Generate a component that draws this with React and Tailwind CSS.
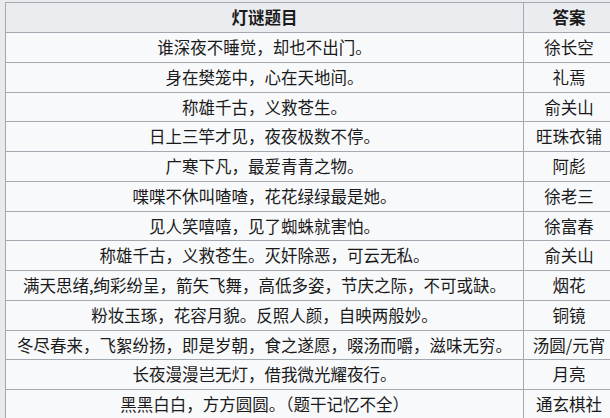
import React from "react";

const riddles = [
  ["谁深夜不睡觉，却也不出门。", "徐长空"],
  ["身在樊笼中，心在天地间。", "礼焉"],
  ["称雄千古，义救苍生。", "俞关山"],
  ["日上三竿才见，夜夜极数不停。", "旺珠衣铺"],
  ["广寒下凡，最爱青青之物。", "阿彪"],
  ["喋喋不休叫喳喳，花花绿绿最是她。", "徐老三"],
  ["见人笑嘻嘻，见了蜘蛛就害怕。", "徐富春"],
  ["称雄千古，义救苍生。灭奸除恶，可云无私。", "俞关山"],
  ["满天思绪,绚彩纷呈，箭矢飞舞，高低多姿，节庆之际，不可或缺。", "烟花"],
  ["粉妆玉琢，花容月貌。反照人颜，自映两般妙。", "铜镜"],
  ["冬尽春来，飞絮纷扬，即是岁朝，食之遂愿，啜汤而嚼，滋味无穷。", "汤圆/元宵"],
  ["长夜漫漫岂无灯，借我微光耀夜行。", "月亮"],
  ["黑黑白白，方方圆圆。（题干记忆不全）", "通玄棋社"],
];

export default function App() {
  return (
    <div
      className="w-[610px] h-[418px] overflow-hidden bg-[#e9eaec] pt-[2px] pl-[5px]"
      style={{ fontFamily: '"Noto Sans CJK SC", "Noto Sans", sans-serif' }}
    >
      <table className="w-[609px] table-fixed border-collapse bg-[#f8f9fa] text-[16.5px] text-[#1a1a1a]">
        <colgroup>
          <col className="w-[518px]" />
          <col className="w-[91px]" />
        </colgroup>
        <thead>
          <tr className="h-[30px] bg-[#eaecf0]">
            <th className="border border-[#a2a9b1] px-1 py-0 text-center font-bold leading-none">灯谜题目</th>
            <th className="border border-[#a2a9b1] px-1 py-0 text-center font-bold leading-none">答案</th>
          </tr>
        </thead>
        <tbody>
          {riddles.map(([q, a], i) => (
            <tr key={i} className="h-[29.75px]">
              <td className="border border-[#a2a9b1] px-1 py-0 text-center leading-none whitespace-nowrap">{q}</td>
              <td className="border border-[#a2a9b1] px-1 py-0 text-center leading-none whitespace-nowrap">{a}</td>
            </tr>
          ))}
        </tbody>
      </table>
    </div>
  );
}
